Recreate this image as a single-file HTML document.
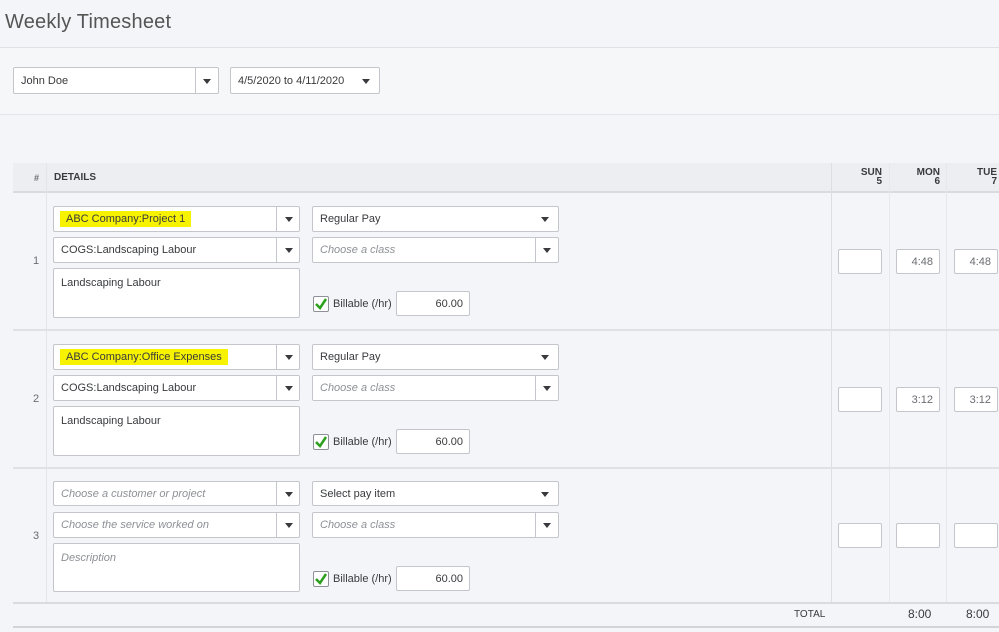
<!DOCTYPE html>
<html><head><meta charset="utf-8"><style>
*{box-sizing:border-box;margin:0;padding:0}
body{width:999px;height:632px;overflow:hidden;background:#f4f5f8;font-family:"Liberation Sans",sans-serif;position:relative;color:#393a3d}
.a{position:absolute}
.box{position:absolute;background:#fff;border:1px solid #c4c6cb;border-radius:2px;font-size:11px;color:#393a3d;padding-left:7px;line-height:25px;white-space:nowrap}
.ph{color:#8d9096;font-style:italic}
.dv{position:absolute;top:0;bottom:0;width:1px;background:#c4c6cb}
.ar{position:absolute;top:10px;width:0;height:0;border-left:4px solid transparent;border-right:4px solid transparent;border-top:5px solid #393a3d}
.hl{background:#f7f300;padding:2px 6px 2px 6px;margin-left:-1px}
.hr{position:absolute;height:25px;width:44px;background:#fff;border:1px solid #c4c6cb;border-radius:2px;font-size:11px;color:#6b6c72;text-align:right;padding-right:6px;line-height:24px}
.vl{position:absolute;width:1px;background:#e6e8eb}
.chk{position:absolute;width:16px;height:16px;border:1px solid #8d9096;background:#fff;border-radius:2px}
.lbl{position:absolute;font-size:11px;color:#393a3d}
.num{position:absolute;left:33px;font-size:11px;color:#6b6c72}
.hd{position:absolute;font-size:10px;font-weight:bold;color:#393a3d;text-align:right;line-height:9px}
</style></head><body>
<div class="a" style="left:0;top:0;width:999px;height:47px;background:#f4f5f8"></div>
<div class="a" style="left:5px;top:11px;font-size:20px;color:#555;letter-spacing:0.2px">Weekly Timesheet</div>
<div class="a" style="left:0;top:47px;width:999px;height:1px;background:#dfe1e5"></div>
<div class="a" style="left:0;top:48px;width:999px;height:66px;background:#f6f7f9"></div>
<div class="a" style="left:0;top:114px;width:999px;height:1px;background:#e2e6ec"></div>
<div class="box" style="left:13px;top:67px;width:206px;height:27px;line-height:26px">John Doe<div class="dv" style="left:181px"></div><div class="ar" style="left:189px;top:11px"></div></div>
<div class="box" style="left:230px;top:67px;width:150px;height:27px;line-height:26px">4/5/2020 to 4/11/2020<div class="ar" style="left:131px;top:11px"></div></div>

<div class="a" style="left:13px;top:163px;width:986px;height:28px;background:#eceef1"></div>
<div class="a" style="left:13px;top:191px;width:986px;height:2px;background:#d9dbdf"></div>
<div class="a" style="left:46px;top:163px;width:1px;height:440px;background:#e3e5e8"></div>
<div class="a" style="left:34px;top:173px;font-size:9px;color:#6b6c72;font-weight:bold">#</div>
<div class="a" style="left:54px;top:172px;font-size:10px;font-weight:bold">DETAILS</div>
<div class="vl" style="left:831px;top:163px;height:440px;background:#dcdee2"></div>
<div class="vl" style="left:889px;top:163px;height:440px"></div>
<div class="vl" style="left:946px;top:163px;height:440px"></div>
<div class="hd" style="left:840px;top:168px;width:42px">SUN<br>5</div>
<div class="hd" style="left:898px;top:168px;width:42px">MON<br>6</div>
<div class="hd" style="left:955px;top:168px;width:42px">TUE<br>7</div>

<div class="a" style="left:13px;top:329px;width:986px;height:2px;background:#dfe1e5"></div>
<div class="a" style="left:13px;top:467px;width:986px;height:2px;background:#dfe1e5"></div>
<div class="a" style="left:13px;top:602px;width:986px;height:2px;background:#d9dbdf"></div>
<div class="a" style="left:13px;top:626px;width:986px;height:2px;background:#d2d4d8"></div>

<div class="num" style="top:255px">1</div>
<div class="box" style="left:53px;top:206px;width:247px;height:26px"><span class="hl">ABC Company:Project 1</span><div class="dv" style="left:222px"></div><div class="ar" style="left:231px"></div></div>
<div class="box" style="left:53px;top:237px;width:247px;height:26px">COGS:Landscaping Labour<div class="dv" style="left:222px"></div><div class="ar" style="left:231px"></div></div>
<div class="box" style="left:53px;top:268px;width:247px;height:50px;line-height:28px">Landscaping Labour</div>
<div class="box" style="left:312px;top:206px;width:247px;height:26px">Regular Pay<div class="ar" style="left:228px"></div></div>
<div class="box" style="left:312px;top:237px;width:247px;height:26px"><span class="ph">Choose a class</span><div class="dv" style="left:222px"></div><div class="ar" style="left:230px"></div></div>
<div class="chk" style="left:313px;top:296px"><svg width="14" height="14" viewBox="0 0 14 14"><path d="M2 7 L6 11 L12 2" stroke="#2ca01c" stroke-width="2.5" fill="none"/></svg></div>
<div class="lbl" style="left:333px;top:298px">Billable (/hr)</div>
<div class="hr" style="left:396px;top:291px;width:74px;color:#393a3d">60.00</div>
<div class="hr" style="left:838px;top:249px"></div>
<div class="hr" style="left:896px;top:249px">4:48</div>
<div class="hr" style="left:954px;top:249px">4:48</div>

<div class="num" style="top:393px">2</div>
<div class="box" style="left:53px;top:344px;width:247px;height:26px"><span class="hl">ABC Company:Office Expenses</span><div class="dv" style="left:222px"></div><div class="ar" style="left:231px"></div></div>
<div class="box" style="left:53px;top:375px;width:247px;height:26px">COGS:Landscaping Labour<div class="dv" style="left:222px"></div><div class="ar" style="left:231px"></div></div>
<div class="box" style="left:53px;top:406px;width:247px;height:50px;line-height:28px">Landscaping Labour</div>
<div class="box" style="left:312px;top:344px;width:247px;height:26px">Regular Pay<div class="ar" style="left:228px"></div></div>
<div class="box" style="left:312px;top:375px;width:247px;height:26px"><span class="ph">Choose a class</span><div class="dv" style="left:222px"></div><div class="ar" style="left:230px"></div></div>
<div class="chk" style="left:313px;top:434px"><svg width="14" height="14" viewBox="0 0 14 14"><path d="M2 7 L6 11 L12 2" stroke="#2ca01c" stroke-width="2.5" fill="none"/></svg></div>
<div class="lbl" style="left:333px;top:436px">Billable (/hr)</div>
<div class="hr" style="left:396px;top:429px;width:74px;color:#393a3d">60.00</div>
<div class="hr" style="left:838px;top:387px"></div>
<div class="hr" style="left:896px;top:387px">3:12</div>
<div class="hr" style="left:954px;top:387px">3:12</div>

<div class="num" style="top:530px">3</div>
<div class="box" style="left:53px;top:481px;width:247px;height:25px"><span class="ph">Choose a customer or project</span><div class="dv" style="left:222px"></div><div class="ar" style="left:231px"></div></div>
<div class="box" style="left:53px;top:512px;width:247px;height:26px"><span class="ph">Choose the service worked on</span><div class="dv" style="left:222px"></div><div class="ar" style="left:231px"></div></div>
<div class="box" style="left:53px;top:543px;width:247px;height:49px;line-height:28px"><span class="ph">Description</span></div>
<div class="box" style="left:312px;top:481px;width:247px;height:25px">Select pay item<div class="ar" style="left:228px"></div></div>
<div class="box" style="left:312px;top:512px;width:247px;height:26px"><span class="ph">Choose a class</span><div class="dv" style="left:222px"></div><div class="ar" style="left:230px"></div></div>
<div class="chk" style="left:313px;top:571px"><svg width="14" height="14" viewBox="0 0 14 14"><path d="M2 7 L6 11 L12 2" stroke="#2ca01c" stroke-width="2.5" fill="none"/></svg></div>
<div class="lbl" style="left:333px;top:573px">Billable (/hr)</div>
<div class="hr" style="left:396px;top:566px;width:74px;color:#393a3d">60.00</div>
<div class="hr" style="left:838px;top:523px"></div>
<div class="hr" style="left:896px;top:523px"></div>
<div class="hr" style="left:954px;top:523px"></div>

<div class="a" style="left:794px;top:609px;font-size:10px;color:#393a3d">TOTAL</div>
<div class="a" style="left:908px;top:607px;font-size:12px;color:#393a3d">8:00</div>
<div class="a" style="left:966px;top:607px;font-size:12px;color:#393a3d">8:00</div>
</body></html>
